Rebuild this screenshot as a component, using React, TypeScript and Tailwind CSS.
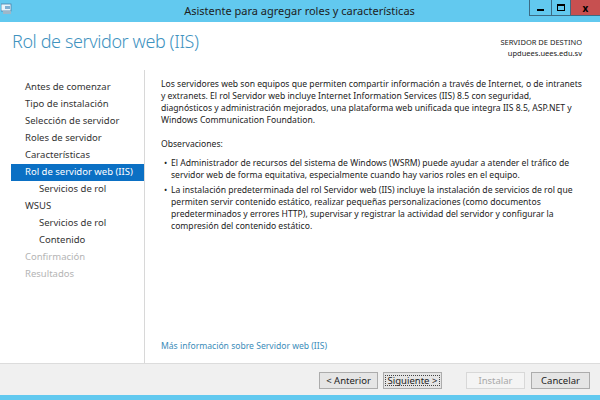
import React from 'react';

interface NavItem {
    label: string;
    indent?: boolean;
    active?: boolean;
    disabled?: boolean;
}

const navItems: NavItem[] = [
    { label: 'Antes de comenzar' },
    { label: 'Tipo de instalación' },
    { label: 'Selección de servidor' },
    { label: 'Roles de servidor' },
    { label: 'Características' },
    { label: 'Rol de servidor web (IIS)', active: true },
    { label: 'Servicios de rol', indent: true },
    { label: 'WSUS' },
    { label: 'Servicios de rol', indent: true },
    { label: 'Contenido', indent: true },
    { label: 'Confirmación', disabled: true },
    { label: 'Resultados', disabled: true },
];

const font = { fontFamily: '"Noto Sans", "Open Sans", sans-serif' };

const WizardButton: React.FC<{ label: string; focused?: boolean; disabled?: boolean }> = ({ label, focused, disabled }) => (
    <button
        className={`h-[17px] w-[59px] border text-[9.5px] leading-none flex items-center justify-center ${disabled
                ? 'border-[#d8d8d8] bg-[#f4f4f4] text-[#a8a8a8]'
                : 'border-[#acacac] bg-[#e5e5e5] text-[#222]'
            }`}
    >
        <span className={focused ? 'outline outline-1 outline-dotted outline-[#444] px-[2px]' : ''}>{label}</span>
    </button>
);

export default function App() {
    return (
        <div className="w-[600px] h-[400px] flex flex-col bg-white overflow-hidden" style={font}>
            {/* title bar */}
            <div className="h-[22px] bg-[#62c9ef] flex items-start">
                <div className="w-[12px] h-[14px] ml-[1px] mt-[3px]">
                    <svg width="12" height="12" viewBox="0 0 12 12">
                        <rect x="0" y="1" width="10" height="7" fill="#e8f4fb" stroke="#4a7fa8" strokeWidth="0.8" />
                        <rect x="2" y="8" width="8" height="3" fill="#9db7c9" />
                        <rect x="4" y="3" width="5" height="3" fill="#7fb0d3" />
                    </svg>
                </div>
                <div className="flex-1 text-center text-[11px] leading-[22px] text-[#1d1d1d] pl-[57px]">
                    Asistente para agregar roles y características
                </div>
                <div className="flex h-[16px] border-l border-b border-[#3c6b84]">
                    <div className="w-[22px] border-r border-[#3c6b84] flex items-center justify-center">
                        <div className="w-[7px] h-[2px] bg-black mt-[4px]" />
                    </div>
                    <div className="w-[19px] border-r border-[#3c6b84] flex items-center justify-center">
                        <div className="w-[8px] h-[7px] border-[1.5px] border-black border-t-[2.5px]" />
                    </div>
                    <div className="w-[29px] bg-[#c75050] flex items-center justify-center text-[10px] font-bold text-black leading-none">
                        x
                    </div>
                </div>
            </div>

            {/* header */}
            <div className="flex justify-between items-start h-[48px] pl-[12px] pr-[18px]">
                <div className="text-[18px] font-light tracking-[-0.4px] text-[#3f93bf] mt-[10px] leading-none">
                    Rol de servidor web (IIS)
                </div>
                <div className="text-right text-[7.5px] leading-[11px] text-[#222] mt-[15px]">
                    <div>SERVIDOR DE DESTINO</div>
                    <div>upduees.uees.edu.sv</div>
                </div>
            </div>

            {/* body */}
            <div className="flex flex-1">
                <div className="w-[134px] ml-[11px] border-r border-[#d8d8d8] pt-[9px] pb-[12px]">
                    {navItems.map((item, i) => (
                        <div
                            key={i}
                            className={`h-[17px] flex items-center text-[9.5px] ${item.indent ? 'pl-[28px]' : 'pl-[14px]'} ${item.active
                                    ? 'bg-[#0b70c4] text-white'
                                    : item.disabled
                                        ? 'text-[#b4b4b4]'
                                        : 'text-[#333]'
                                }`}
                        >
                            {item.label}
                        </div>
                    ))}
                </div>

                <div className="flex-1 flex flex-col pl-[16px] pr-[8px] pt-[8px] text-[8.6px] leading-[12px] text-[#222]">
                    <p>
                        Los servidores web son equipos que permiten compartir información a través de Internet, o de intranets
                        <br />
                        y extranets. El rol Servidor web incluye Internet Information Services (IIS) 8.5 con seguridad,
                        <br />
                        diagnósticos y administración mejorados, una plataforma web unificada que integra IIS 8.5, ASP.NET y
                        <br />
                        Windows Communication Foundation.
                    </p>
                    <p className="mt-[12px]">Observaciones:</p>
                    <ul className="mt-[7px] flex flex-col gap-[3px] pr-[4px]">
                        <li className="flex">
                            <span className="w-[10px] pl-[3px] shrink-0">•</span>
                            <span>
                                El Administrador de recursos del sistema de Windows (WSRM) puede ayudar a atender el tráfico de
                                servidor web de forma equitativa, especialmente cuando hay varios roles en el equipo.
                            </span>
                        </li>
                        <li className="flex">
                            <span className="w-[10px] pl-[3px] shrink-0">•</span>
                            <span>
                                La instalación predeterminada del rol Servidor web (IIS) incluye la instalación de servicios de rol que
                                permiten servir contenido estático, realizar pequeñas personalizaciones (como documentos
                                predeterminados y errores HTTP), supervisar y registrar la actividad del servidor y configurar la
                                compresión del contenido estático.
                            </span>
                        </li>
                    </ul>
                    <div className="mt-auto mb-[11px] text-[#3a8cb9]">Más información sobre Servidor web (IIS)</div>
                </div>
            </div>

            {/* footer */}
            <div className="h-[32px] bg-[#f0f0f0] border-t border-[#dcdcdc] flex items-start justify-end pr-[10px] pt-[8px]">
                <div className="flex gap-[5px]">
                    <WizardButton label="< Anterior" />
                    <WizardButton label="Siguiente >" focused />
                </div>
                <div className="flex gap-[6px] ml-[24px]">
                    <WizardButton label="Instalar" disabled />
                    <WizardButton label="Cancelar" />
                </div>
            </div>
            <div className="h-[5px] bg-[#62c9ef]" />
        </div>
    );
}
